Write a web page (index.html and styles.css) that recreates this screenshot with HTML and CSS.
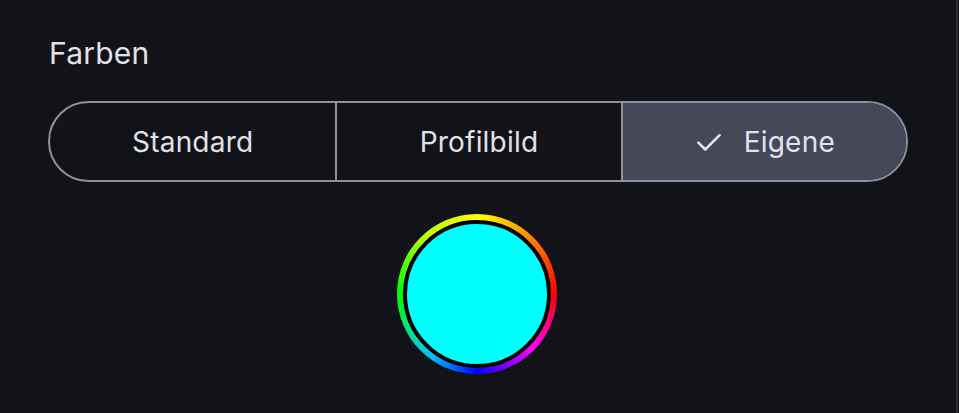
FILE: index.html
```html
<!DOCTYPE html>
<html lang="de">
<head>
<meta charset="utf-8">
<link rel="stylesheet" href="styles.css">
</head>
<body>
<main class="panel">
  <h2 class="title">Farben</h2>
  <div class="segmented">
    <button class="seg">Standard</button>
    <button class="seg">Profilbild</button>
    <button class="seg seg-active">
      <svg class="check" viewBox="0 0 24 24" width="30" height="30"><path d="M3.5 12.5l5.5 5.5L20.5 6.5" fill="none" stroke="currentColor" stroke-width="2.1" stroke-linecap="round" stroke-linejoin="round"/></svg>
      <span>Eigene</span>
    </button>
  </div>
  <div class="wheel-wrap">
    <div class="wheel">
      <div class="swatch"></div>
    </div>
  </div>
</main>
</body>
</html>
```
FILE: styles.css
```css
html, body {
  margin: 0;
  padding: 0;
  background: #121318;
  height: 100%;
}
body {
  font-family: Inter, "Noto Sans", sans-serif;
  color: #e3e2ea;
  overflow: hidden;
}
.panel {
  box-sizing: border-box;
  width: 958px;
  height: 413px;
  border-right: 2px solid #2c2d33;
  padding: 35px 48px 0 48px;
}
.title {
  margin: 0 0 0 1px;
  font-size: 30px;
  font-weight: 400;
  line-height: 37px;
  letter-spacing: 0.2px;
}
.segmented {
  margin-top: 29px;
  display: grid;
  grid-template-columns: 1fr 1fr 1fr;
  height: 81px;
  box-sizing: border-box;
  border: 2px solid #8f909a;
  border-radius: 41px;
  overflow: hidden;
}
.seg {
  background: transparent;
  border: 0;
  color: #e3e2ea;
  font-family: inherit;
  font-size: 28px;
  letter-spacing: 0.2px;
  display: flex;
  align-items: center;
  justify-content: center;
  gap: 20px;
  padding: 0;
}
.seg + .seg {
  border-left: 2px solid #8f909a;
}
.seg-active {
  background: #454859;
}
.check {
  display: block;
  margin-left: 0;
}
.wheel-wrap {
  display: flex;
  justify-content: center;
  margin-top: 32px;
  padding-right: 2px;
}
.wheel {
  width: 160px;
  height: 160px;
  box-sizing: border-box;
  border-radius: 50%;
  padding: 6px;
  background: conic-gradient(#ffff00 0deg, #ff8000 45deg, #ff0000 90deg, #ff00ff 135deg, #0000ff 180deg, #00c0ff 215deg, #00ff00 270deg, #c0ff00 320deg, #ffff00 360deg);
}
.swatch {
  width: 100%;
  height: 100%;
  box-sizing: border-box;
  border-radius: 50%;
  border: 4px solid #000;
  background: #00ffff;
}
```
